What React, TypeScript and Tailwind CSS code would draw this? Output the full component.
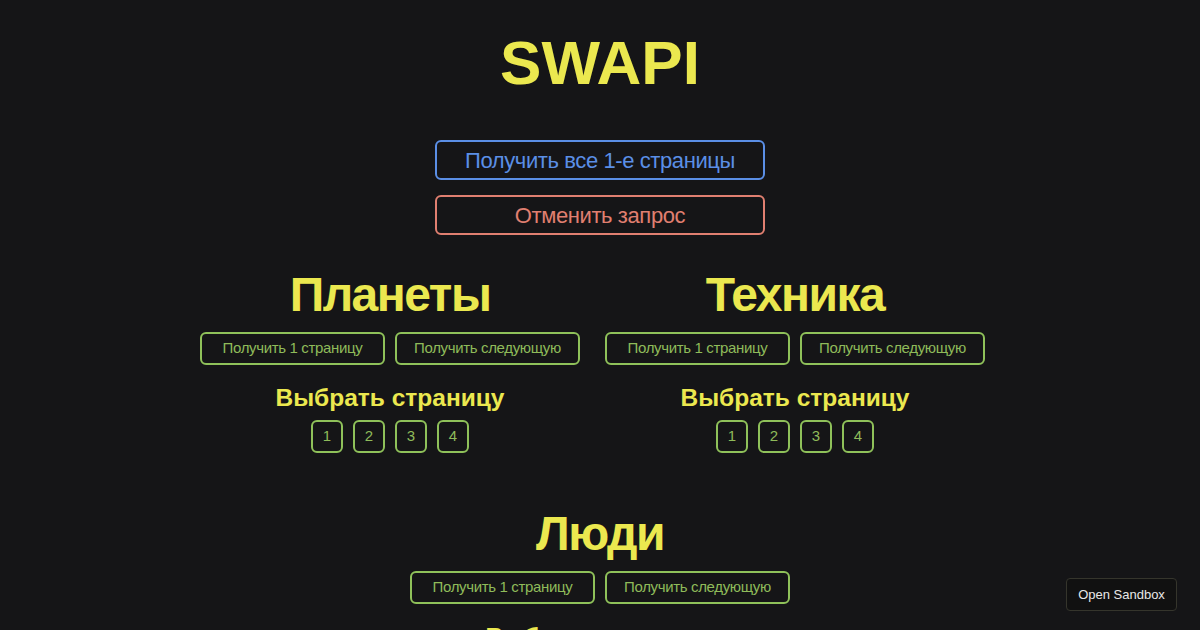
import React from "react";

const pages = [1, 2, 3, 4];

const SmallButton = ({ children }: { children: React.ReactNode }) => (
  <button className="h-[33px] w-[185px] rounded-[6px] border-2 border-[#8fc15a] bg-transparent text-[15px] tracking-[-0.35px] text-[#8fbb5a]">
    {children}
  </button>
);

const PageButton = ({ n }: { n: number }) => (
  <button className="h-[33px] w-[32px] rounded-[6px] border-2 border-[#8fc15a] bg-transparent text-[15px] text-[#8fbb5a]">
    {n}
  </button>
);

const Section = ({ title, className }: { title: string; className?: string }) => (
  <div className={`flex w-[380px] flex-col items-center ${className ?? ""}`}>
    <h2 className="text-[48px] font-bold leading-none tracking-[-1.5px] text-[#ebe84f]">{title}</h2>
    <div className="mt-[13px] flex gap-[10px]">
      <SmallButton>Получить 1 страницу</SmallButton>
      <SmallButton>Получить следующую</SmallButton>
    </div>
    <h3 className="mt-[21px] text-[24.5px] font-bold leading-none text-[#ebe84f]">Выбрать страницу</h3>
    <div className="mt-[9px] flex gap-[10px]">
      {pages.map((n) => (
        <PageButton key={n} n={n} />
      ))}
    </div>
  </div>
);

export default function App() {
  return (
    <div
      className="relative h-[630px] w-full overflow-hidden bg-[#151517]"
      style={{ fontFamily: '"Liberation Sans", Arial, sans-serif' }}
    >
      <div className="flex flex-col items-center">
        <h1 className="mt-[32px] text-[62px] font-bold leading-none text-[#ebe84f]">SWAPI</h1>
        <button className="mt-[46px] h-[40px] w-[330px] rounded-[6px] border-2 border-[#5b8fe6] bg-transparent text-[22px] tracking-[-0.4px] text-[#5b8fe6]">
          Получить все 1-е страницы
        </button>
        <button className="mt-[15px] h-[40px] w-[330px] rounded-[6px] border-2 border-[#e07f70] bg-transparent text-[22px] tracking-[-0.4px] text-[#e07f70]">
          Отменить запрос
        </button>
        <div className="mt-[36px] flex justify-center gap-[25px] pr-[15px]">
          <Section title="Планеты" />
          <Section title="Техника" />
        </div>
        <Section title="Люди" className="mt-[57px]" />
      </div>
      <button className="absolute bottom-[19px] right-[23px] h-[33px] w-[111px] rounded-[4px] border border-[#35352c] bg-[#111111] text-[13px] text-[#e8e8e8]">
        Open Sandbox
      </button>
    </div>
  );
}
